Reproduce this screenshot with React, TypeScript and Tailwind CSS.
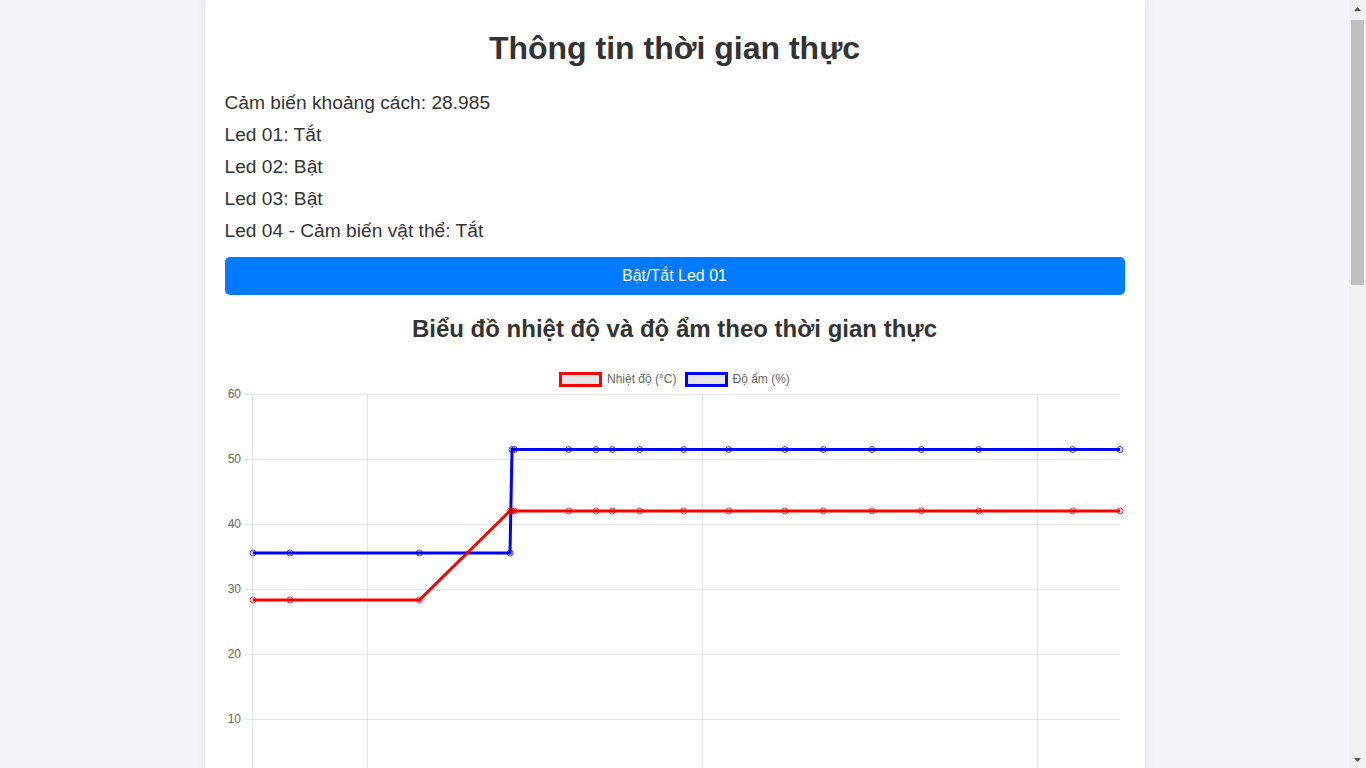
import React from "react";

const XS = [28, 65, 194.3, 285, 287, 289.3, 343.7, 371, 387.3, 414.7, 458.7, 503.7, 560, 598.3, 647, 696.3, 753.7, 847.7, 895];
const TEMP = XS.map((_, i) => (i < 3 ? 240 : 151));
const HUM = XS.map((_, i) => (i < 4 ? 193 : 89.5));
const GRID_Y = [34, 99, 164, 229, 294, 359, 424];
const LABELS = ["60", "50", "40", "30", "20", "10", ""];
const GRID_X = [27.5, 142.5, 477.5, 812.5];

function pathOf(ys: number[]) {
  return XS.map((x, i) => `${i === 0 ? "M" : "L"}${x} ${ys[i]}`).join(" ");
}

function Chart() {
  return (
    <svg width="900" height="440" viewBox="0 0 900 440" className="block" style={{ fontFamily: "'Liberation Sans', Arial, sans-serif" }}>
      {/* legend */}
      <rect x="335.5" y="13.5" width="40" height="12" fill="rgba(0,0,0,0.1)" stroke="#ff0000" strokeWidth="3" />
      <text x="382" y="23" fontSize="12" fill="#666">Nhiệt độ (°C)</text>
      <rect x="461.5" y="13.5" width="40" height="12" fill="rgba(0,0,0,0.1)" stroke="#0000ff" strokeWidth="3" />
      <text x="507.5" y="23" fontSize="12" fill="#666">Độ ẩm (%)</text>

      {/* horizontal grid */}
      {GRID_Y.map((y, i) => (
        <g key={y}>
          <line x1="20" x2="895" y1={y + 0.5} y2={y + 0.5} stroke="rgba(0,0,0,0.1)" strokeWidth="1" />
          {LABELS[i] && (
            <text x="16" y={y + 4} fontSize="12" fill="#666" textAnchor="end">{LABELS[i]}</text>
          )}
        </g>
      ))}
      {/* vertical grid */}
      {GRID_X.map((x) => (
        <line key={x} x1={x} x2={x} y1="34" y2="432" stroke="rgba(0,0,0,0.1)" strokeWidth="1" />
      ))}

      {/* humidity */}
      <path d={pathOf(HUM)} fill="none" stroke="#0000ff" strokeWidth="3" strokeLinejoin="miter" />
      {XS.map((x, i) => (
        <circle key={"h" + i} cx={x} cy={HUM[i]} r="3" fill="rgba(0,0,0,0.1)" stroke="#0000ff" strokeOpacity="0.7" strokeWidth="1" />
      ))}
      {/* temperature */}
      <path d={pathOf(TEMP)} fill="none" stroke="#ff0000" strokeWidth="3" strokeLinejoin="miter" />
      {XS.map((x, i) => (
        <circle key={"t" + i} cx={x} cy={TEMP[i]} r="3" fill="rgba(0,0,0,0.1)" stroke="#ff0000" strokeOpacity="0.7" strokeWidth="1" />
      ))}
    </svg>
  );
}

function Scrollbar() {
  return (
    <div className="flex h-[768px] w-[17px] shrink-0 flex-col items-center bg-[#f1f1f1]">
      <div className="flex h-[17px] w-full items-center justify-center">
        <svg width="7" height="4" viewBox="0 0 7 4"><path d="M3.5 0L7 4H0Z" fill="#505050" /></svg>
      </div>
      <div className="mt-[3px] h-[265px] w-[13px] bg-[#c1c1c1]" />
      <div className="flex-1" />
      <div className="flex h-[17px] w-full items-center justify-center">
        <svg width="7" height="4" viewBox="0 0 7 4"><path d="M0 0H7L3.5 4Z" fill="#505050" /></svg>
      </div>
    </div>
  );
}

export default function App() {
  return (
    <div className="flex h-[768px] overflow-hidden font-['Liberation_Sans',Arial,sans-serif] text-[#333]">
      <div className="h-[768px] flex-1 overflow-hidden bg-[#f4f4f9]">
        <div className="mx-auto min-h-[768px] w-[940px] bg-white px-5 pt-[30px] shadow-[0_0_10px_rgba(0,0,0,0.1)]">
          <h1 className="text-center text-[32px] font-bold leading-[37px]">Thông tin thời gian thực</h1>
          <div className="mt-[25px] flex flex-col gap-[10px] text-[19.2px] leading-[22px]">
            <p>Cảm biến khoảng cách: 28.985</p>
            <p>Led 01: Tắt</p>
            <p>Led 02: Bật</p>
            <p>Led 03: Bật</p>
            <p>Led 04 - Cảm biến vật thể: Tắt</p>
          </div>
          <button className="mt-[15px] h-[38px] w-full rounded-[5px] bg-[#007bff] text-[16px] text-white">Bật/Tắt Led 01</button>
          <h2 className="mt-[20px] text-center text-[24px] font-bold leading-[28px]">Biểu đồ nhiệt độ và độ ẩm theo thời gian thực</h2>
          <div className="mt-[17px]">
            <Chart />
          </div>
        </div>
      </div>
      <Scrollbar />
    </div>
  );
}
